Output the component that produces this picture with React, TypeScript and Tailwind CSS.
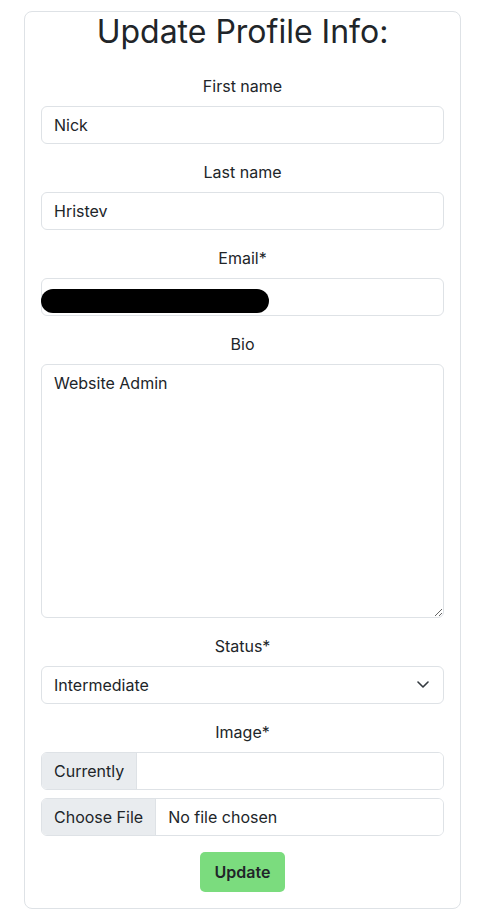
export default function App() {
  const input =
    "block h-[38px] w-full rounded-[6px] border border-[#dee2e6] bg-white px-3 text-[16px] text-[#212529] outline-none";
  const label = "mb-2 block text-center text-[16px] leading-6 text-[#212529]";

  return (
    <main className="min-h-screen bg-white pt-[11px] font-['Inter','Noto_Sans',sans-serif] text-[#212529]">
      <div className="ml-[24px] w-[437px] rounded-[8px] border border-[#dee2e6] px-4 pb-4">
        <h2 className="mt-0 mb-[22px] text-center text-[32px] leading-[40px] font-normal text-[#212529]">
          Update Profile Info:
        </h2>

        <form className="flex flex-col gap-4">
          <div>
            <label className={label}>First name</label>
            <input className={input} defaultValue="Nick" />
          </div>

          <div>
            <label className={label}>Last name</label>
            <input className={input} defaultValue="Hristev" />
          </div>

          <div>
            <label className={label}>Email*</label>
            <div className="relative">
              <input className={input} defaultValue="" />
              <div className="absolute top-[11px] left-0 h-[24px] w-[228px] rounded-full bg-black" />
            </div>
          </div>

          <div>
            <label className={label}>Bio</label>
            <textarea
              className="block h-[254px] w-full resize-y rounded-[6px] border border-[#dee2e6] bg-white px-3 py-[6px] text-[16px] leading-6 text-[#212529] outline-none"
              defaultValue="Website Admin"
            />
          </div>

          <div>
            <label className={label}>Status*</label>
            <div className="relative">
              <select className={input + " appearance-none pr-9"} defaultValue="intermediate">
                <option value="beginner">Beginner</option>
                <option value="intermediate">Intermediate</option>
                <option value="advanced">Advanced</option>
              </select>
              <svg
                className="pointer-events-none absolute top-[15px] right-[15px] h-[7px] w-[12px]"
                viewBox="0 0 12 7"
              >
                <path d="M1 1l5 5 5-5" fill="none" stroke="#343a40" strokeWidth="1.6" strokeLinecap="round" strokeLinejoin="round" />
              </svg>
            </div>
          </div>

          <div>
            <label className={label}>Image*</label>
            <div className="flex h-[38px] overflow-hidden rounded-[6px] border border-[#dee2e6]">
              <span className="flex items-center border-r border-[#dee2e6] bg-[#e9ecef] px-3 text-[16px]">Currently</span>
              <span className="flex-1 bg-white" />
            </div>
            <div className="mt-2 flex h-[38px] overflow-hidden rounded-[6px] border border-[#dee2e6]">
              <span className="flex items-center border-r border-[#dee2e6] bg-[#e9ecef] px-3 text-[16px]">Choose File</span>
              <span className="flex flex-1 items-center bg-white px-3 text-[16px]">No file chosen</span>
            </div>
          </div>

          <div className="flex justify-center">
            <button
              type="button"
              className="h-[40px] w-[85px] rounded-[5px] bg-[#7bdc7e] text-[16px] font-semibold text-[#212529]"
            >
              Update
            </button>
          </div>
        </form>
      </div>
    </main>
  );
}
